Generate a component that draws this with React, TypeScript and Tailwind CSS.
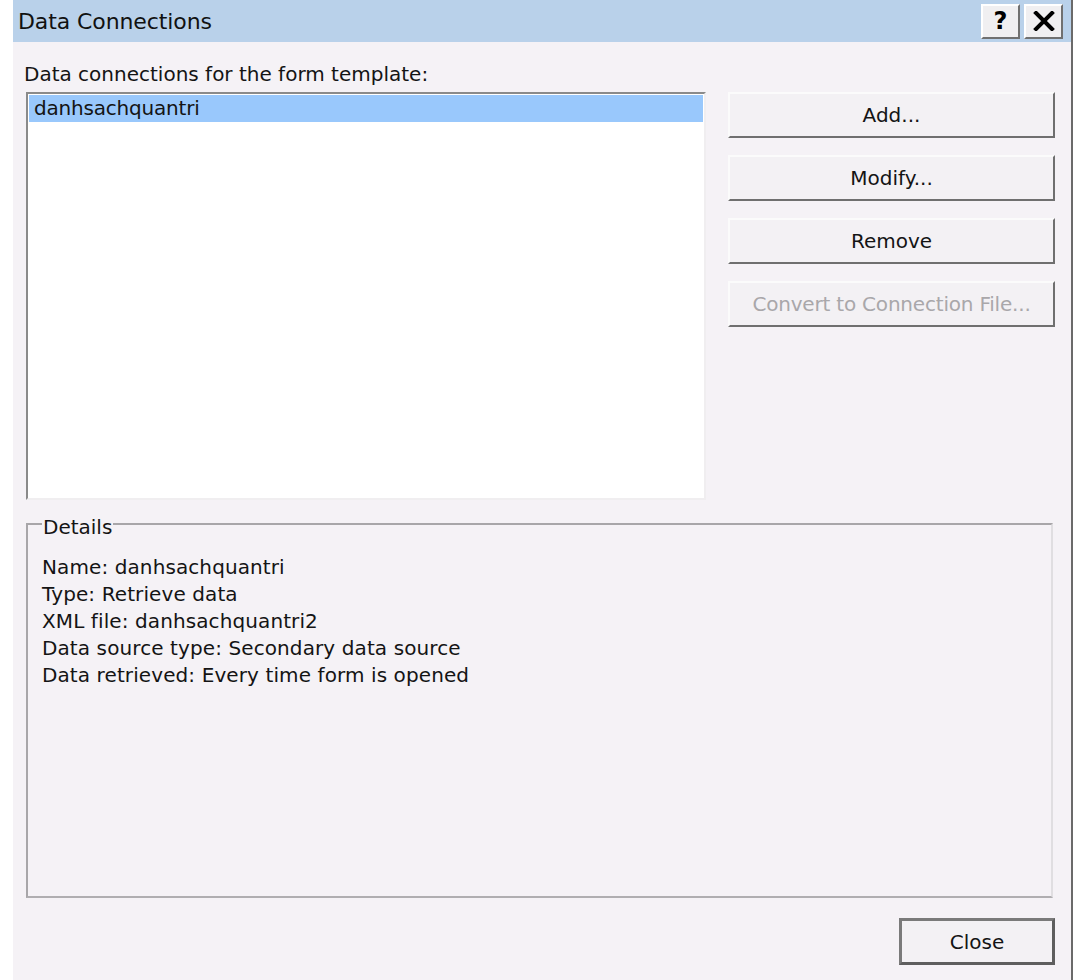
import React from "react"

const font = { fontFamily: '"DejaVu Sans", "Liberation Sans", sans-serif' }

function WinButton({ label, disabled, className }: { label: string; disabled?: boolean; className?: string }) {
  return (
    <button
      disabled={disabled}
      className={`flex items-center justify-center bg-[#f3f1f4] border-2 border-t-[#fbfbfb] border-l-[#fbfbfb] border-b-[#6f6f6f] border-r-[#6f6f6f] text-[20px] ${
        disabled ? "text-[#a9a7aa]" : "text-[#141414]"
      } ${className ?? ""}`}
    >
      {label}
    </button>
  )
}

export default function App() {
  const details = [
    "Name: danhsachquantri",
    "Type: Retrieve data",
    "XML file: danhsachquantri2",
    "Data source type: Secondary data source",
    "Data retrieved: Every time form is opened",
  ]

  return (
    <div className="w-[1080px] h-[980px] bg-white flex" style={font}>
      <div className="w-[13px] shrink-0" />
      <div className="w-[1060px] h-full flex flex-col border-r-2 border-r-[#6a6a6a] bg-[#f5f2f6]">
        {/* title bar */}
        <div className="h-[42px] bg-[#b9d1ea] flex items-center pl-[5px] pr-[8px]">
          <span className="text-[22px] text-[#111] tracking-[-0.1px]">Data Connections</span>
          <div className="ml-auto flex gap-[4px]">
            <div className="w-[39px] h-[35px] bg-[#f0eff1] border-2 border-t-white border-l-white border-b-[#707070] border-r-[#707070] flex items-center justify-center text-[24px] font-bold text-black">
              ?
            </div>
            <div className="w-[39px] h-[35px] bg-[#f0eff1] border-2 border-t-white border-l-white border-b-[#707070] border-r-[#707070] flex items-center justify-center">
              <svg width="22" height="20" viewBox="0 0 22 20">
                <path d="M3 2 L19 18 M19 2 L3 18" stroke="#000" strokeWidth="4" strokeLinecap="square" />
              </svg>
            </div>
          </div>
        </div>

        {/* client */}
        <div className="flex-1 flex flex-col pl-[11px] pr-[16px] text-[#141414]">
          <div className="mt-[19px] h-[26px] text-[20px] leading-[26px] tracking-[0px]">
            Data connections for the form template:
          </div>
          <div className="mt-[5px] flex pl-[2px]">
            <div className="w-[680px] h-[408px] bg-white border-2 border-t-[#8a8a8a] border-l-[#8a8a8a] border-b-[#f0eef0] border-r-[#f0eef0] p-[1px]">
              <div className="h-[27px] bg-[#99c8fc] text-[20px] pl-[5px] leading-[27px] tracking-[-0.2px]">
                danhsachquantri
              </div>
            </div>
            <div className="ml-[22px] w-[327px] flex flex-col gap-[17px]">
              <WinButton label="Add..." className="h-[46px]" />
              <WinButton label="Modify..." className="h-[46px]" />
              <WinButton label="Remove" className="h-[46px]" />
              <WinButton label="Convert to Connection File..." disabled className="h-[46px] tracking-[-0.2px]" />
            </div>
          </div>

          {/* details groupbox */}
          <div className="mt-[23px] ml-[2px] w-[1027px] h-[375px] border-2 border-t-[#a8a6a9] border-l-[#a8a6a9] border-b-[#b0aeb1] border-r-[#e0dee1] relative pt-[29px] pl-[14px]">
            <span className="absolute -top-[11px] left-[14px] bg-[#f5f2f6] px-[1px] text-[20px] leading-[26px]">
              Details
            </span>
            {details.map((line) => (
              <div key={line} className="text-[20px] leading-[27px] tracking-[0.1px]">
                {line}
              </div>
            ))}
          </div>

          <div className="mt-[20px] flex justify-end">
            <button className="w-[156px] h-[47px] bg-[#f3f1f4] border-[3px] border-[#5e5e5e] border-t-[#7a7a7a] border-l-[#7a7a7a] text-[20px] text-[#141414] flex items-center justify-center">
              Close
            </button>
          </div>
        </div>
      </div>
    </div>
  )
}
